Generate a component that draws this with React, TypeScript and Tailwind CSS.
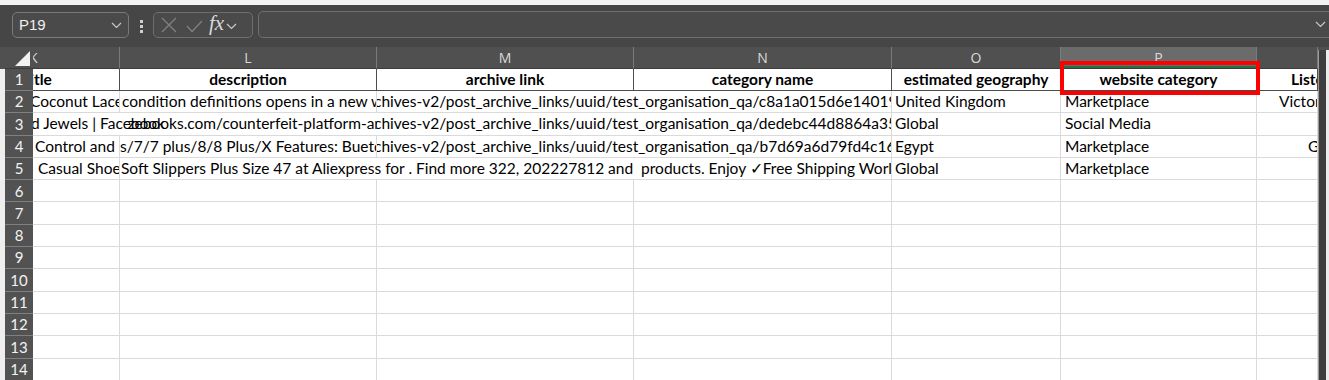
import React from "react";

type Seg = {
  w: string;
  text?: string;
  pos?: string;
  center?: boolean;
  over?: string;
  open?: boolean;
};

const K = "w-[87px]";
const L = "w-[257px]";
const M = "w-[257px]";
const N = "w-[258px]";
const O = "w-[169px]";
const P = "w-[196px]";
const Q = "w-[61px]";

const headers = [
  { k: "K", w: K },
  { k: "L", w: L },
  { k: "M", w: M },
  { k: "N", w: N },
  { k: "O", w: O },
  { k: "P", w: P },
  { k: "", w: Q },
];

const empty: Seg[] = [{ w: K }, { w: L }, { w: M }, { w: N }, { w: O }, { w: P }, { w: Q }];

const rows: Seg[][] = [
  [
    { w: K, text: "title", pos: "-ml-[9px]" },
    { w: L, text: "description", center: true },
    { w: M, text: "archive link", center: true },
    { w: N, text: "category name", center: true },
    { w: O, text: "estimated geography", center: true },
    { w: P, text: "website category", center: true },
    { w: Q, text: "Listed", pos: "ml-[34px]" },
  ],
  [
    { w: K, text: "Coconut Lace Top", pos: "-ml-[3px]" },
    { w: L, text: "condition definitions opens in a new window", pos: "ml-[2px]" },
    { w: "w-[515px]", text: "chives-v2/post_archive_links/uuid/test_organisation_qa/c8a1a015d6e14019b2", pos: "-ml-[3px]" },
    { w: O, text: "United Kingdom", pos: "ml-[3px]" },
    { w: P, text: "Marketplace", pos: "ml-[4px]" },
    { w: Q, text: "Victoria", pos: "ml-[22px]" },
  ],
  [
    {
      w: "w-[344px]",
      text: "d Jewels | Facebook",
      pos: "-ml-[2px]",
      over: "zebooks.com/counterfeit-platform-ar",
      open: true,
    },
    { w: "w-[515px]", text: "chives-v2/post_archive_links/uuid/test_organisation_qa/dedebc44d8864a35e", pos: "-ml-[3px]" },
    { w: O, text: "Global", pos: "ml-[3px]" },
    { w: P, text: "Social Media", pos: "ml-[4px]" },
    { w: Q },
  ],
  [
    { w: K, text: "Control and IPhone", pos: "ml-[2px]" },
    { w: L, text: "s/7/7 plus/8/8 Plus/X Features: Buetooth", pos: "ml-[0px]" },
    { w: "w-[515px]", text: "chives-v2/post_archive_links/uuid/test_organisation_qa/b7d69a6d79fd4c16a", pos: "-ml-[3px]" },
    { w: O, text: "Egypt", pos: "ml-[3px]" },
    { w: P, text: "Marketplace", pos: "ml-[4px]" },
    { w: Q, text: "Green", pos: "ml-[51px]" },
  ],
  [
    { w: K, text: " Casual Shoes", pos: "ml-[1px]" },
    {
      w: "w-[772px]",
      text: "Soft Slippers Plus Size 47 at Aliexpress for . Find more 322, 202227812 and  products. Enjoy \u2713Free Shipping Worldwide!",
      pos: "ml-[1px]",
    },
    { w: O, text: "Global", pos: "ml-[3px]" },
    { w: P, text: "Marketplace", pos: "ml-[4px]" },
    { w: Q },
  ],
  empty, empty, empty, empty, empty, empty, empty, empty, empty,
];

function Chevron({ className }: { className?: string }) {
  return (
    <svg width="11" height="7" viewBox="0 0 11 7" className={className}>
      <path d="M1 1 L5.5 5.5 L10 1" fill="none" stroke="#c9c9c9" strokeWidth="1.2" />
    </svg>
  );
}

function FormulaBar() {
  return (
    <div className="h-[42px] flex items-start font-['Liberation_Sans',sans-serif]">
      <div className="ml-[12px] mt-[7px] w-[117px] shrink-0 h-[26px] rounded-[5px] border border-[#7a7a7a] bg-[#4a4a4a] flex items-center justify-between pl-[6px] pr-[6px]">
        <span className="text-[15px] text-[#f0f0f0]">P19</span>
        <Chevron />
      </div>
      <div className="ml-[11px] mt-[15px] flex flex-col gap-[2px]">
        <div className="w-[3px] h-[3px] bg-[#cfcfcf]" />
        <div className="w-[3px] h-[3px] bg-[#cfcfcf]" />
        <div className="w-[3px] h-[3px] bg-[#cfcfcf]" />
      </div>
      <div className="ml-[10px] mt-[7px] w-[100px] shrink-0 h-[26px] rounded-[5px] border border-[#6e6e6e] bg-[#4a4a4a] flex items-center pl-[7px]">
        <svg width="16" height="16" viewBox="0 0 16 16">
          <path d="M1 1 L15 15 M15 1 L1 15" stroke="#808080" strokeWidth="1.3" fill="none" />
        </svg>
        <svg width="17" height="13" viewBox="0 0 17 13" className="ml-[9px] mt-[3px]">
          <path d="M1 6 L6 11.5 L16 1" stroke="#808080" strokeWidth="1.3" fill="none" />
        </svg>
        <span className="ml-[6px] -mt-[3px] font-['Liberation_Serif',serif] italic text-[21px] leading-none text-[#dadada]">
          fx
        </span>
        <Chevron className="ml-[2px] mt-[2px]" />
      </div>
      <div className="ml-[5px] mt-[6px] w-[1081px] shrink-0 h-[27px] rounded-[5px] border border-[#6e6e6e] bg-[#4a4a4a] flex items-center justify-end pr-[12px]">
        <Chevron />
      </div>
    </div>
  );
}

function ColumnHeaders() {
  return (
    <div className="h-[22px] flex bg-[#505050] font-['Open_Sans',sans-serif] text-[14px] text-[#dadada]">
      <div className="w-[5px]" />
      <div className="w-[28px] relative border-b border-[#3c3c3c]">
        <svg width="28" height="22" viewBox="0 0 28 22" className="absolute left-0 top-0">
          <polygon points="25,4 25,19 10,19" fill="#f2f2f2" />
        </svg>
      </div>
      {headers.map((h) => (
        <div
          key={h.w + h.k}
          className={`${h.w} relative overflow-hidden flex items-center border-r border-b border-r-[#7b7b7b] border-b-[#3c3c3c] ${
            h.k === "K" ? "justify-start" : "justify-center"
          } ${h.k === "P" ? "bg-[#6b6b6b]" : ""}`}
        >
          <span className={h.k === "K" ? "-ml-[4px]" : ""}>{h.k}</span>
          {h.k === "P" && <div className="absolute left-0 right-0 bottom-0 h-[2px] bg-[#217346]" />}
        </div>
      ))}
    </div>
  );
}

function Row({ n, segs }: { n: number; segs: Seg[] }) {
  const first = n === 1;
  const line = first ? "border-[#4d4d4d]" : "border-[#dadada]";
  return (
    <div className={`flex ${first ? "h-[22px]" : "h-[22.3px]"} font-['Lato',sans-serif] text-[15.5px] text-black`}>
      <div className="w-[5px] bg-[#efefef]" />
      <div className="w-[28px] bg-[#525252] border-b border-[#808080] flex items-center justify-center text-[15px] text-[#f2f2f2]">
        {n}
      </div>
      {segs.map((s, i) => (
        <div
          key={i}
          className={`${s.w} relative overflow-hidden whitespace-pre bg-white border-b ${s.open ? "" : "border-r"} ${line} flex items-center ${
            s.center ? "justify-center" : ""
          } ${first ? "font-bold" : ""}`}
        >
          {s.text && <span className={`shrink-0 ${s.pos ?? ""}`}>{s.text}</span>}
          {s.over && (
            <span className="absolute top-0 bottom-0 -right-[3px] flex items-center">{s.over}</span>
          )}
        </div>
      ))}
    </div>
  );
}

function ScrollTrack() {
  return (
    <div className="w-[11px] flex flex-col">
      <div className="h-[3px] bg-[#505050]" />
      <div className="flex-1 flex">
        <div className="w-[1px] bg-[#9a9a9a]" />
        <div className="w-[7px] bg-[#3e3e3e] rounded-tl-[3px]" />
        <div className="w-[3px] bg-[#ececec]" />
      </div>
    </div>
  );
}

export default function App() {
  return (
    <div className="relative w-[1329px] h-[380px] overflow-hidden bg-[#464646]">
      <div className="h-[5px] bg-[#f3f3f3]" />
      <FormulaBar />
      <div className="flex">
        <div className="w-[1318px] shrink-0">
          <ColumnHeaders />
          {rows.map((r, i) => (
            <Row key={i} n={i + 1} segs={r} />
          ))}
        </div>
        <ScrollTrack />
      </div>
      <div className="absolute left-[1060px] top-[61px] w-[200px] h-[34px] border-4 border-[#ff0000]" />
    </div>
  );
}
